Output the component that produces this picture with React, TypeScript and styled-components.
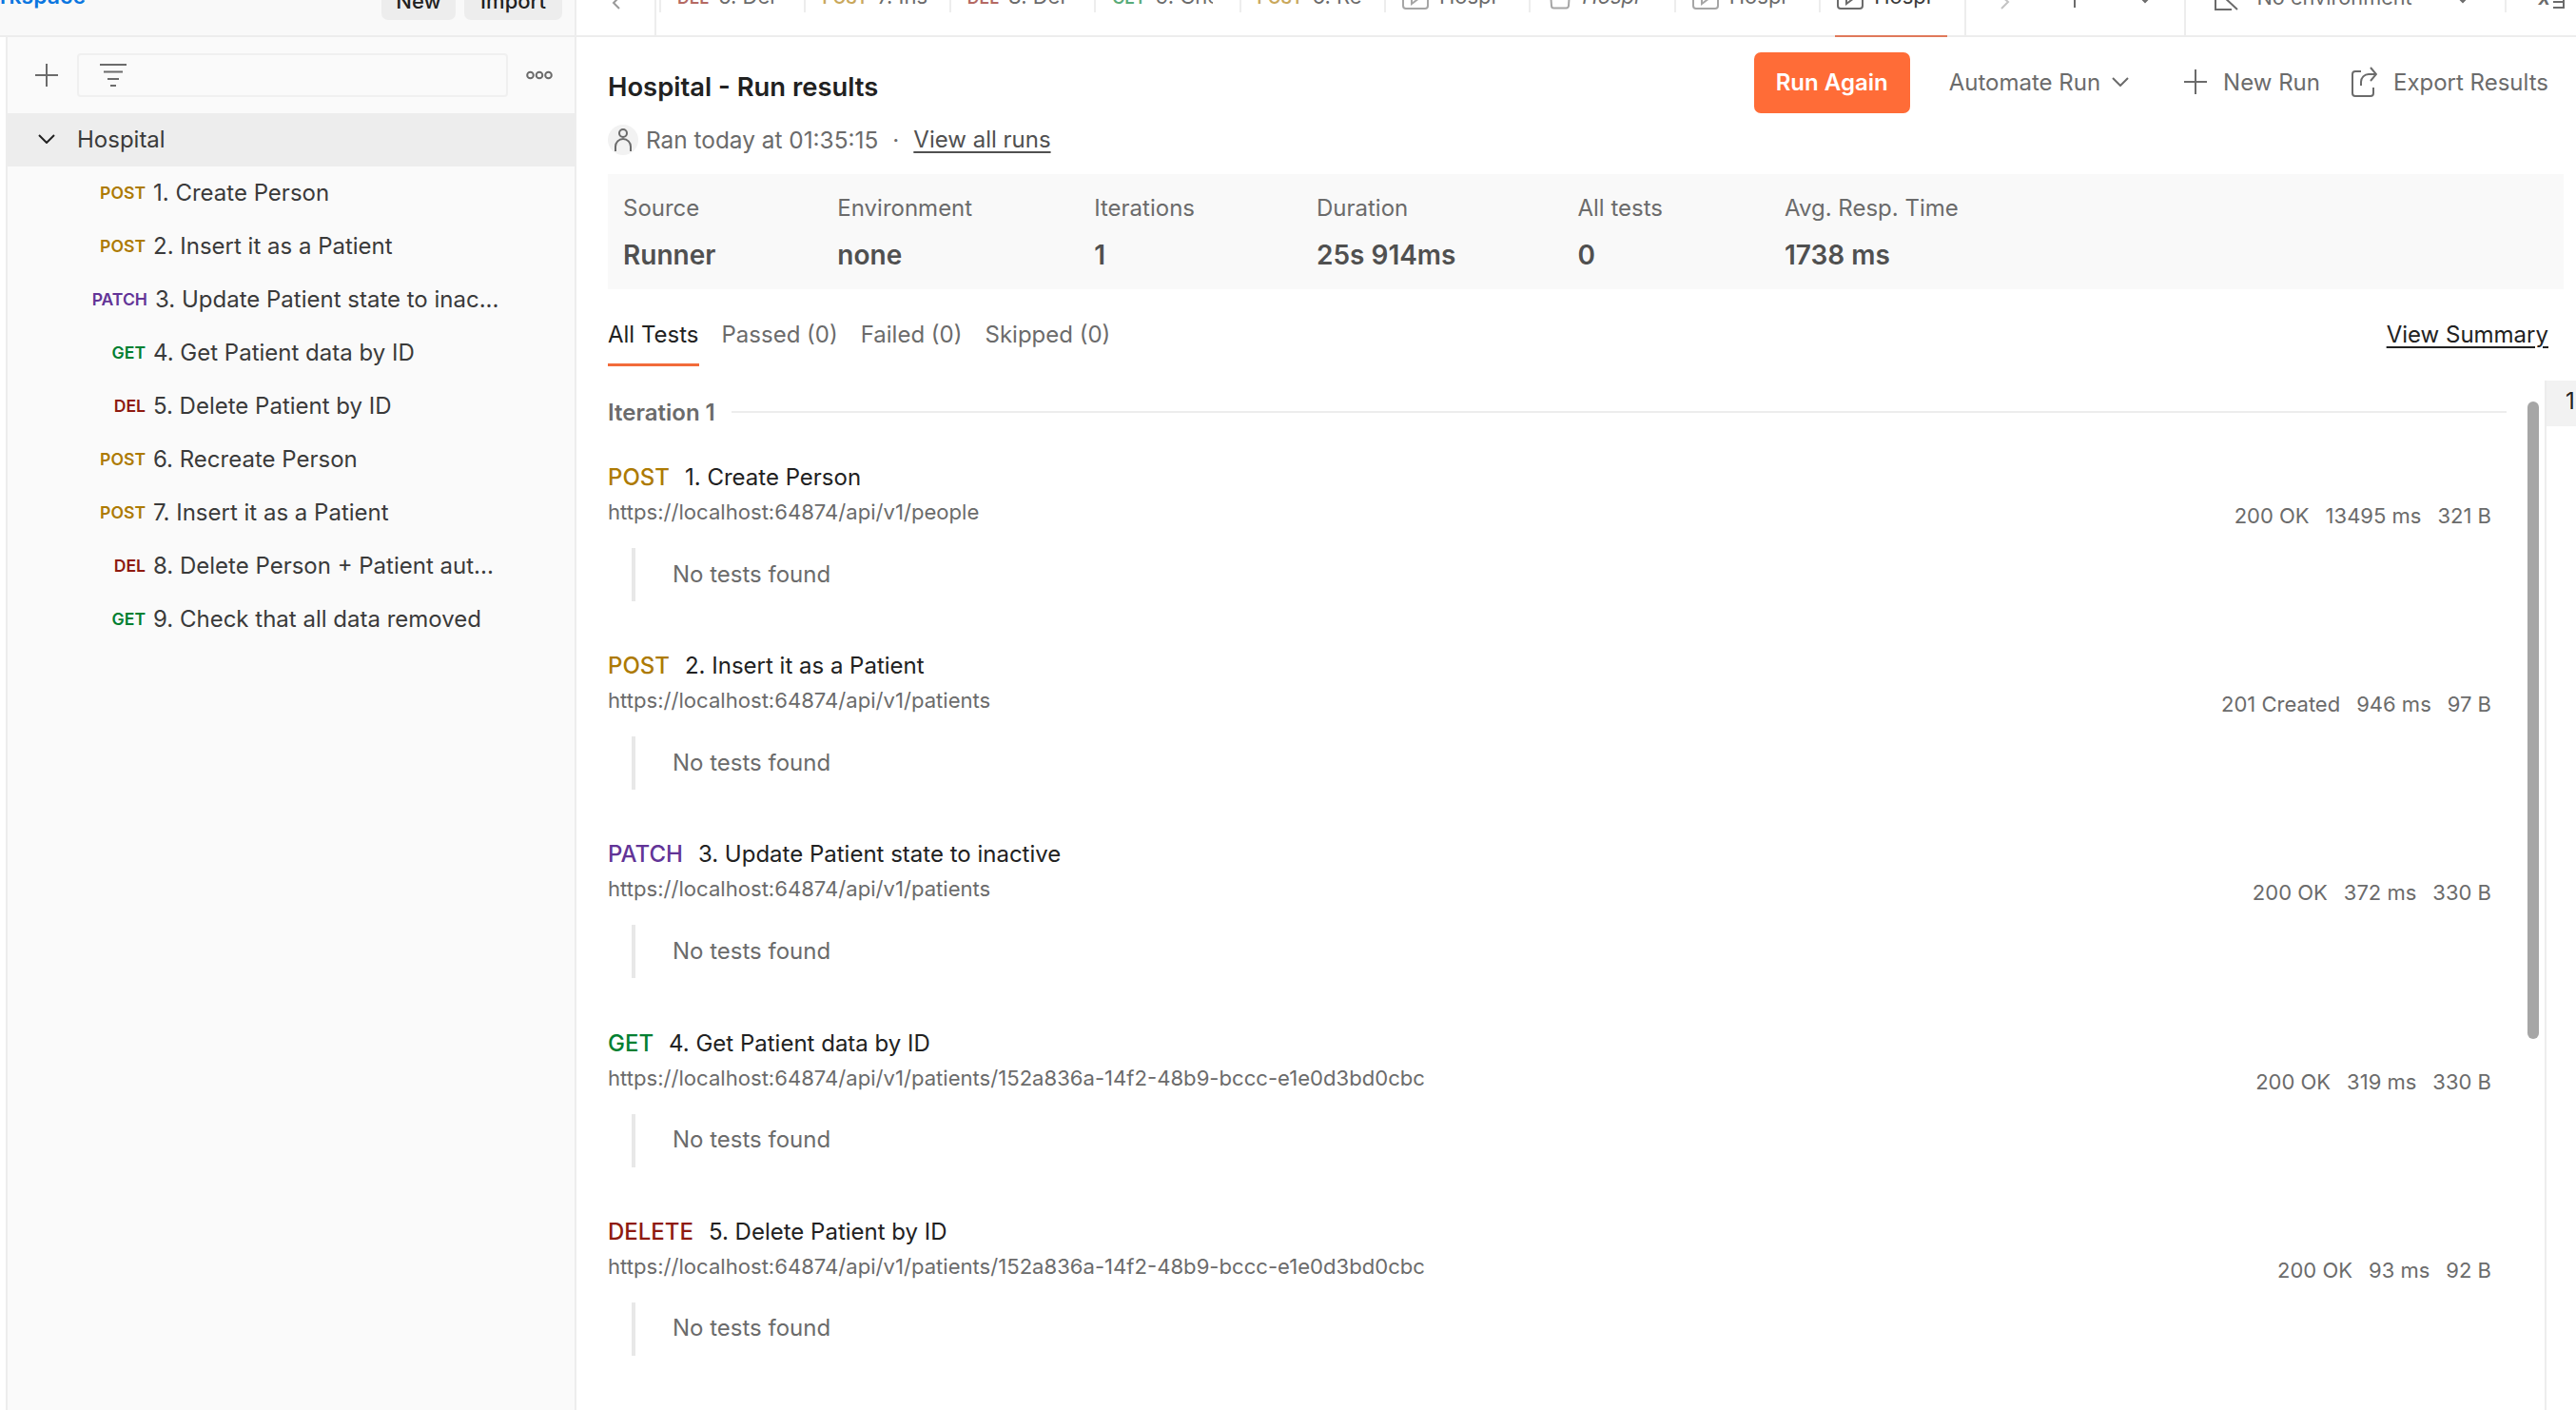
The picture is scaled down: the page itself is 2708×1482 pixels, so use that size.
import styled, { createGlobalStyle } from "styled-components";

type Verb = "POST" | "PATCH" | "GET" | "DEL" | "DELETE";

const verbColors: Record<Verb, string> = {
  POST: "#ad7a03",
  PATCH: "#623497",
  GET: "#007f31",
  DEL: "#8e1a10",
  DELETE: "#8e1a10",
};

const sidebarRows: { verb: Verb; name: string }[] = [
  { verb: "POST", name: "1. Create Person" },
  { verb: "POST", name: "2. Insert it as a Patient" },
  { verb: "PATCH", name: "3. Update Patient state to inac..." },
  { verb: "GET", name: "4. Get Patient data by ID" },
  { verb: "DEL", name: "5. Delete Patient by ID" },
  { verb: "POST", name: "6. Recreate Person" },
  { verb: "POST", name: "7. Insert it as a Patient" },
  { verb: "DEL", name: "8. Delete Person + Patient aut..." },
  { verb: "GET", name: "9. Check that all data removed" },
];

const requestTabs: { verb: Verb; name: string }[] = [
  { verb: "DEL", name: "5. Del" },
  { verb: "POST", name: "7. Ins" },
  { verb: "DEL", name: "8. Del" },
  { verb: "GET", name: "9. Che" },
  { verb: "POST", name: "6. Re" },
];

const summary = [
  { label: "Source", value: "Runner" },
  { label: "Environment", value: "none" },
  { label: "Iterations", value: "1" },
  { label: "Duration", value: "25s 914ms" },
  { label: "All tests", value: "0" },
  { label: "Avg. Resp. Time", value: "1738 ms" },
];

const longUrl =
  "https://localhost:64874/api/v1/patients/152a836a-14f2-48b9-bccc-e1e0d3bd0cbc";

const results: {
  verb: Verb;
  name: string;
  url: string;
  status: string;
  time: string;
  size: string;
}[] = [
  {
    verb: "POST",
    name: "1. Create Person",
    url: "https://localhost:64874/api/v1/people",
    status: "200 OK",
    time: "13495 ms",
    size: "321 B",
  },
  {
    verb: "POST",
    name: "2. Insert it as a Patient",
    url: "https://localhost:64874/api/v1/patients",
    status: "201 Created",
    time: "946 ms",
    size: "97 B",
  },
  {
    verb: "PATCH",
    name: "3. Update Patient state to inactive",
    url: "https://localhost:64874/api/v1/patients",
    status: "200 OK",
    time: "372 ms",
    size: "330 B",
  },
  {
    verb: "GET",
    name: "4. Get Patient data by ID",
    url: longUrl,
    status: "200 OK",
    time: "319 ms",
    size: "330 B",
  },
  {
    verb: "DELETE",
    name: "5. Delete Patient by ID",
    url: longUrl,
    status: "200 OK",
    time: "93 ms",
    size: "92 B",
  },
];

function RunnerIcon({ muted, preview }: { muted?: boolean; preview?: boolean }) {
  return (
    <TabIcon width={preview ? 24 : 28} height="32" viewBox={preview ? "0 0 24 32" : "0 0 28 32"} $muted={muted}>
      {preview ? (
        <path d="M1 0l2 28a2.5 2.5 0 0 0 2.5 2.5h13a2.5 2.5 0 0 0 2.5-2.5l2-28" fill="none" stroke="currentColor" strokeWidth="2" />
      ) : (
        <>
          <rect x="1" y="1" width="26" height="30" rx="3" fill="none" stroke="currentColor" strokeWidth="2" />
          <path d="M10 14l8 6-8 6z" fill="none" stroke="currentColor" strokeWidth="2" />
        </>
      )}
    </TabIcon>
  );
}

export default function App() {
  return (
    <Page>
      <GlobalStyle />
      <TopBar>
        <WorkspaceBar>
          <WorkspaceName>rkspace</WorkspaceName>
          <WorkspaceButtons>
            <SmallButton $width={78}>New</SmallButton>
            <SmallButton $width={103}>Import</SmallButton>
          </WorkspaceButtons>
        </WorkspaceBar>
        <TabStrip>
          <BackCell>
            <svg width="14" height="10" viewBox="0 0 14 10">
              <path d="M11 -4L4 3l6 6" fill="none" stroke="#9a9a9a" strokeWidth="2" />
            </svg>
          </BackCell>
          {requestTabs.map((tab) => (
            <Tab key={tab.name}>
              <TabVerb $verb={tab.verb}>{tab.verb}</TabVerb>
              <TabName>{tab.name}</TabName>
            </Tab>
          ))}
          <Tab $icon>
            <RunnerIcon muted />
            <TabName>Hospi</TabName>
          </Tab>
          <Tab $icon $preview>
            <RunnerIcon muted preview />
            <TabName $italic>Hospi</TabName>
          </Tab>
          <Tab $icon>
            <RunnerIcon muted />
            <TabName>Hospi</TabName>
          </Tab>
          <Tab $icon $active>
            <RunnerIcon />
            <TabName $active>Hospi</TabName>
          </Tab>
          <TabTools>
            <svg width="12" height="12" viewBox="0 0 12 12">
              <path d="M3 -4l7 6-7 7" fill="none" stroke="#c4c4c4" strokeWidth="2" />
            </svg>
            <ToolTick />
            <svg width="12" height="6" viewBox="0 0 12 6">
              <path d="M1 -3l5 5 5-5" fill="none" stroke="#6b6b6b" strokeWidth="2" />
            </svg>
          </TabTools>
          <EnvCell>
            <svg width="27" height="12" viewBox="0 0 27 12">
              <path d="M1 -6v16h17M9 -4l15 14" fill="none" stroke="#6b6b6b" strokeWidth="2" />
            </svg>
            <EnvName>No environment</EnvName>
            <svg width="12" height="6" viewBox="0 0 12 6">
              <path d="M1 -3l5 5 5-5" fill="none" stroke="#6b6b6b" strokeWidth="2" />
            </svg>
            <EnvDivider />
            <VarsIcon>
              <VarsX>x</VarsX>
              <svg width="14" height="10" viewBox="0 0 14 10">
                <path d="M1 2h10M1 8h10M12 -2v11" fill="none" stroke="#6b6b6b" strokeWidth="2" />
              </svg>
            </VarsIcon>
          </EnvCell>
        </TabStrip>
      </TopBar>

      <Body>
        <Rail />
        <Sidebar>
          <SideTools>
            <svg width="24" height="24" viewBox="0 0 24 24">
              <path d="M12 0v24M0 12h24" stroke="#6b6b6b" strokeWidth="2" />
            </svg>
            <FilterBox>
              <svg width="28" height="24" viewBox="0 0 28 24">
                <path d="M0 1h28M4 8.5h20M8 16h12M11 23h6" stroke="#6b6b6b" strokeWidth="2" />
              </svg>
            </FilterBox>
            <svg width="28" height="10" viewBox="0 0 28 10">
              <circle cx="4.5" cy="5" r="3.3" fill="none" stroke="#6b6b6b" strokeWidth="2" />
              <circle cx="14" cy="5" r="3.3" fill="none" stroke="#6b6b6b" strokeWidth="2" />
              <circle cx="23.5" cy="5" r="3.3" fill="none" stroke="#6b6b6b" strokeWidth="2" />
            </svg>
          </SideTools>
          <FolderRow>
            <svg width="18" height="10" viewBox="0 0 18 10">
              <path d="M1 1l8 8 8-8" fill="none" stroke="#212121" strokeWidth="2" />
            </svg>
            Hospital
          </FolderRow>
          {sidebarRows.map((row) => (
            <SideRow key={row.name}>
              <SideVerb $verb={row.verb}>{row.verb}</SideVerb>
              <span>{row.name}</span>
            </SideRow>
          ))}
        </Sidebar>

        <Main>
          <Header>
            <div>
              <Title>Hospital - Run results</Title>
              <RanRow>
                <Avatar>
                  <svg width="20" height="26" viewBox="0 0 20 26">
                    <circle cx="10" cy="6" r="4" fill="none" stroke="#6b6b6b" strokeWidth="2" />
                    <path d="M2 25v-5a8 8 0 0 1 16 0v5" fill="none" stroke="#6b6b6b" strokeWidth="2" />
                  </svg>
                </Avatar>
                Ran today at 01:35:15
                <Dot>·</Dot>
                <RunsLink>View all runs</RunsLink>
              </RanRow>
            </div>
            <Actions>
              <RunAgain>Run Again</RunAgain>
              <ActionText $gap={41}>
                Automate Run
                <ChevronSvg width="18" height="10" viewBox="0 0 18 10">
                  <path d="M1 1l8 8 8-8" fill="none" stroke="#6b6b6b" strokeWidth="2" />
                </ChevronSvg>
              </ActionText>
              <ActionText $gap={58}>
                <svg width="24" height="26" viewBox="0 0 24 26">
                  <path d="M12 0v26M0 13h24" stroke="#6b6b6b" strokeWidth="2" />
                </svg>
                New Run
              </ActionText>
              <ActionText $gap={33}>
                <svg width="27" height="32" viewBox="0 0 27 32">
                  <path
                    d="M10 5H4a3 3 0 0 0-3 3v20a3 3 0 0 0 3 3h16a3 3 0 0 0 3-3v-6M10 20v-4a8 8 0 0 1 8-8h8M20 1l6 7-6 7"
                    fill="none"
                    stroke="#6b6b6b"
                    strokeWidth="2"
                  />
                </svg>
                Export Results
              </ActionText>
            </Actions>
          </Header>

          <SummaryBox>
            {summary.map((item) => (
              <SummaryItem key={item.label}>
                <SummaryLabel>{item.label}</SummaryLabel>
                <SummaryValue>{item.value}</SummaryValue>
              </SummaryItem>
            ))}
          </SummaryBox>

          <TabsRow>
            <ResultTabs>
              <ResultTab $active>All Tests</ResultTab>
              <ResultTab>Passed (0)</ResultTab>
              <ResultTab>Failed (0)</ResultTab>
              <ResultTab>Skipped (0)</ResultTab>
            </ResultTabs>
            <SummaryLink>View Summary</SummaryLink>
          </TabsRow>

          <ResultsArea>
            <ResultsList>
              <IterationRow>
                Iteration 1
                <IterationLine />
              </IterationRow>
              {results.map((item) => (
                <ResultItem key={item.name}>
                  <ResultHead>
                    <div>
                      <ResultTitle>
                        <ResultVerb $verb={item.verb}>{item.verb}</ResultVerb>
                        {item.name}
                      </ResultTitle>
                      <ResultUrl>{item.url}</ResultUrl>
                    </div>
                    <ResultStats>
                      <span>{item.status}</span>
                      <span>{item.time}</span>
                      <span>{item.size}</span>
                    </ResultStats>
                  </ResultHead>
                  <NoTests>No tests found</NoTests>
                </ResultItem>
              ))}
            </ResultsList>
            <ScrollThumb />
            <IterationsPanel>
              <IterationCell>1</IterationCell>
            </IterationsPanel>
          </ResultsArea>
        </Main>
      </Body>
    </Page>
  );
}

const GlobalStyle = createGlobalStyle`
  html, body {
    margin: 0;
    height: 100%;
    overflow: hidden;
    background: #fff;
  }
  * {
    box-sizing: border-box;
  }
`;

const Page = styled.div`
  width: 2708px;
  height: 1482px;
  display: flex;
  flex-direction: column;
  overflow: hidden;
  font-family: Inter, "Noto Sans", sans-serif;
  font-size: 24px;
  color: #212121;
  background: #fff;
`;

const TopBar = styled.div`
  height: 39px;
  flex: none;
  display: flex;
  border-bottom: 2px solid #ededed;
`;

const WorkspaceBar = styled.div`
  width: 606px;
  flex: none;
  display: flex;
  justify-content: space-between;
  padding-right: 13px;
  background: #f9f9f9;
  border-right: 2px solid #ededed;
`;

const WorkspaceName = styled.div`
  margin-top: -19px;
  line-height: 30px;
  font-size: 23px;
  font-weight: 600;
  color: #0b76e0;
`;

const WorkspaceButtons = styled.div`
  display: flex;
  gap: 9px;
`;

const SmallButton = styled.div<{ $width: number }>`
  width: ${(p) => p.$width}px;
  height: 40px;
  margin-top: -19px;
  display: flex;
  align-items: center;
  justify-content: center;
  border-radius: 7px;
  background: #ededed;
  font-size: 22px;
  font-weight: 500;
  color: #212121;
`;

const TabStrip = styled.div`
  flex: 1;
  display: flex;
`;

const BackCell = styled.div`
  width: 84px;
  flex: none;
  padding-left: 35px;
  border-right: 2px solid #ededed;
  margin-right: 3px;
  svg {
    display: block;
  }
`;

const Tab = styled.div<{ $icon?: boolean; $active?: boolean; $preview?: boolean }>`
  width: 152.4px;
  flex: none;
  position: relative;
  display: flex;
  gap: ${(p) => (p.$icon ? "11px" : "10px")};
  padding-left: ${(p) => (p.$preview ? "21px" : "19px")};
  white-space: nowrap;
  &::before {
    content: "";
    position: absolute;
    left: 0;
    top: 0;
    width: 2px;
    height: 13px;
    background: #ededed;
  }
  &::after {
    content: "";
    display: ${(p) => (p.$active ? "block" : "none")};
    position: absolute;
    left: 17px;
    bottom: -2px;
    width: 118px;
    height: 2px;
    background: #e0795a;
  }
`;

const TabVerb = styled.span<{ $verb: Verb }>`
  margin-top: -15.5px;
  height: 26px;
  line-height: 26px;
  font-size: 17.6px;
  font-weight: 600;
  color: ${(p) => verbColors[p.$verb]};
  opacity: 0.65;
`;

const TabName = styled.span<{ $italic?: boolean; $active?: boolean }>`
  width: 60px;
  overflow: hidden;
  margin-top: -17.5px;
  height: 26px;
  line-height: 26px;
  font-size: 22px;
  font-style: ${(p) => (p.$italic ? "italic" : "normal")};
  color: ${(p) => (p.$active ? "#3a3a3a" : "#6b6b6b")};
`;

const TabIcon = styled.svg<{ $muted?: boolean }>`
  margin-top: -22px;
  flex: none;
  color: ${(p) => (p.$muted ? "#a6a6a6" : "#6b6b6b")};
`;

const TabTools = styled.div`
  width: 233px;
  flex: none;
  display: flex;
  gap: 67px;
  padding-left: 34px;
  border-left: 2px solid #ededed;
  border-right: 2px solid #ededed;
  svg {
    display: block;
    flex: none;
  }
`;

const ToolTick = styled.div`
  width: 2px;
  height: 8px;
  background: #6b6b6b;
`;

const EnvCell = styled.div`
  flex: 1;
  display: flex;
  padding-left: 30px;
  svg {
    display: block;
    flex: none;
  }
`;

const EnvName = styled.span`
  width: 162px;
  white-space: nowrap;
  margin: -16.5px 48px 0 18px;
  height: 26px;
  line-height: 26px;
  font-size: 21.7px;
  color: #6b6b6b;
`;

const EnvDivider = styled.div`
  width: 2px;
  height: 13px;
  margin-left: 38px;
  background: #ededed;
`;

const VarsIcon = styled.div`
  display: flex;
  gap: 2px;
  margin-left: 34px;
`;

const VarsX = styled.span`
  margin-top: -16px;
  height: 26px;
  line-height: 26px;
  font-size: 22px;
  font-weight: 600;
  font-style: italic;
  color: #6b6b6b;
`;

const Body = styled.div`
  flex: 1;
  min-height: 0;
  display: flex;
`;

const Rail = styled.div`
  width: 8px;
  flex: none;
  background: #fff;
  border-right: 2px solid #ededed;
`;

const Sidebar = styled.div`
  width: 598px;
  flex: none;
  background: #fafafa;
  border-right: 2px solid #ededed;
`;

const SideTools = styled.div`
  height: 80px;
  display: flex;
  align-items: center;
  padding-left: 29px;
  svg {
    flex: none;
  }
`;

const FilterBox = styled.div`
  width: 453px;
  height: 46px;
  margin: 0 19px 0 20px;
  padding-left: 22px;
  display: flex;
  align-items: center;
  border: 2px solid #f0f0f0;
  border-radius: 4px;
`;

const FolderRow = styled.div`
  height: 56px;
  padding: 0 0 2px 32px;
  display: flex;
  align-items: center;
  gap: 23px;
  background: #ededed;
  color: #3a3a3a;
`;

const SideRow = styled.div`
  height: 56px;
  padding-bottom: 2px;
  display: flex;
  align-items: center;
  gap: 8px;
  color: #3a3a3a;
  white-space: nowrap;
`;

const SideVerb = styled.span<{ $verb: Verb }>`
  width: ${(p) => (p.$verb === "PATCH" ? 147 : 145)}px;
  flex: none;
  text-align: right;
  font-size: 17.6px;
  font-weight: 600;
  color: ${(p) => verbColors[p.$verb]};
`;

const Main = styled.div`
  flex: 1;
  min-width: 0;
  padding-left: 33px;
  display: flex;
  flex-direction: column;
`;

const Header = styled.div`
  height: 144px;
  flex: none;
  display: flex;
  justify-content: space-between;
`;

const Title = styled.div`
  margin-top: 35px;
  line-height: 34px;
  font-size: 27.4px;
  font-weight: 600;
  color: #212121;
`;

const RanRow = styled.div`
  margin-top: 23px;
  height: 32px;
  padding-bottom: 1px;
  display: flex;
  align-items: center;
  font-size: 24.4px;
  color: #6b6b6b;
`;

const Avatar = styled.div`
  width: 32px;
  height: 32px;
  margin-right: 8px;
  display: flex;
  align-items: center;
  justify-content: center;
  border-radius: 50%;
  background: #f2f2f2;
`;

const Dot = styled.span`
  margin: 0 15px;
`;

const RunsLink = styled.span`
  font-size: 24px;
  text-decoration: underline;
  text-underline-offset: 4px;
  color: #505050;
`;

const Actions = styled.div`
  display: flex;
  align-items: center;
  height: 64px;
  margin: 16px 29px 0 0;
`;

const RunAgain = styled.div`
  width: 164px;
  height: 64px;
  padding-bottom: 2px;
  display: flex;
  align-items: center;
  justify-content: center;
  border-radius: 7px;
  background: #ff6c37;
  color: #fff;
  font-weight: 600;
`;

const ActionText = styled.div<{ $gap: number }>`
  margin-left: ${(p) => p.$gap}px;
  padding-bottom: 2px;
  display: flex;
  align-items: center;
  gap: 17px;
  color: #6b6b6b;
  white-space: nowrap;
`;

const ChevronSvg = styled.svg`
  margin-left: -5px;
`;

const SummaryBox = styled.div`
  height: 121px;
  flex: none;
  margin-right: 13px;
  padding: 21px 16px 0;
  display: flex;
  gap: 128px;
  background: #f9f9f9;
`;

const SummaryItem = styled.div`
  display: flex;
  flex-direction: column;
  gap: 19px;
`;

const SummaryLabel = styled.div`
  line-height: 30px;
  color: #6b6b6b;
`;

const SummaryValue = styled.div`
  line-height: 30px;
  font-size: 28px;
  font-weight: 600;
  color: #505050;
  white-space: nowrap;
`;

const TabsRow = styled.div`
  height: 96px;
  flex: none;
  display: flex;
  justify-content: space-between;
  padding: 32px 29px 0 0;
`;

const ResultTabs = styled.div`
  display: flex;
  gap: 24px;
`;

const ResultTab = styled.div<{ $active?: boolean }>`
  height: 49px;
  line-height: 32px;
  color: ${(p) => (p.$active ? "#212121" : "#6b6b6b")};
  border-bottom: 3px solid ${(p) => (p.$active ? "#f26b3a" : "transparent")};
`;

const SummaryLink = styled.div`
  line-height: 32px;
  color: #212121;
  text-decoration: underline;
  text-underline-offset: 4px;
`;

const ResultsArea = styled.div`
  flex: 1;
  min-height: 0;
  display: flex;
`;

const ResultsList = styled.div`
  flex: 1;
  min-width: 0;
  padding-top: 18px;
`;

const IterationRow = styled.div`
  height: 30px;
  margin-bottom: 38px;
  padding-right: 22px;
  display: flex;
  align-items: center;
  gap: 17px;
  font-weight: 600;
  color: #6b6b6b;
`;

const IterationLine = styled.div`
  flex: 1;
  height: 2px;
  background: #ededed;
`;

const ResultItem = styled.div`
  height: 198.2px;
  padding-right: 38px;
`;

const ResultHead = styled.div`
  display: flex;
  justify-content: space-between;
`;

const ResultTitle = styled.div`
  line-height: 32px;
  color: #212121;
`;

const ResultVerb = styled.span<{ $verb: Verb }>`
  margin-right: 16px;
  font-weight: 500;
  color: ${(p) => verbColors[p.$verb]};
`;

const ResultUrl = styled.div`
  margin-top: 6px;
  line-height: 28px;
  font-size: 22.1px;
  color: #6b6b6b;
`;

const ResultStats = styled.div`
  margin-top: 42px;
  display: flex;
  gap: 17px;
  line-height: 28px;
  font-size: 22px;
  color: #6b6b6b;
`;

const NoTests = styled.div`
  margin: 20px 0 0 25px;
  height: 56px;
  padding: 0 0 2px 39px;
  display: flex;
  align-items: center;
  border-left: 4px solid #e8e8e8;
  color: #6b6b6b;
`;

const ScrollThumb = styled.div`
  width: 12px;
  height: 670px;
  flex: none;
  margin: 22px 6px 0 0;
  border-radius: 6px;
  background: #a6a6a6;
`;

const IterationsPanel = styled.div`
  width: 33px;
  flex: none;
  border-left: 2px solid #ededed;
`;

const IterationCell = styled.div`
  height: 48px;
  padding-left: 20px;
  line-height: 44px;
  background: #f2f2f2;
  color: #212121;
  overflow: hidden;
`;
